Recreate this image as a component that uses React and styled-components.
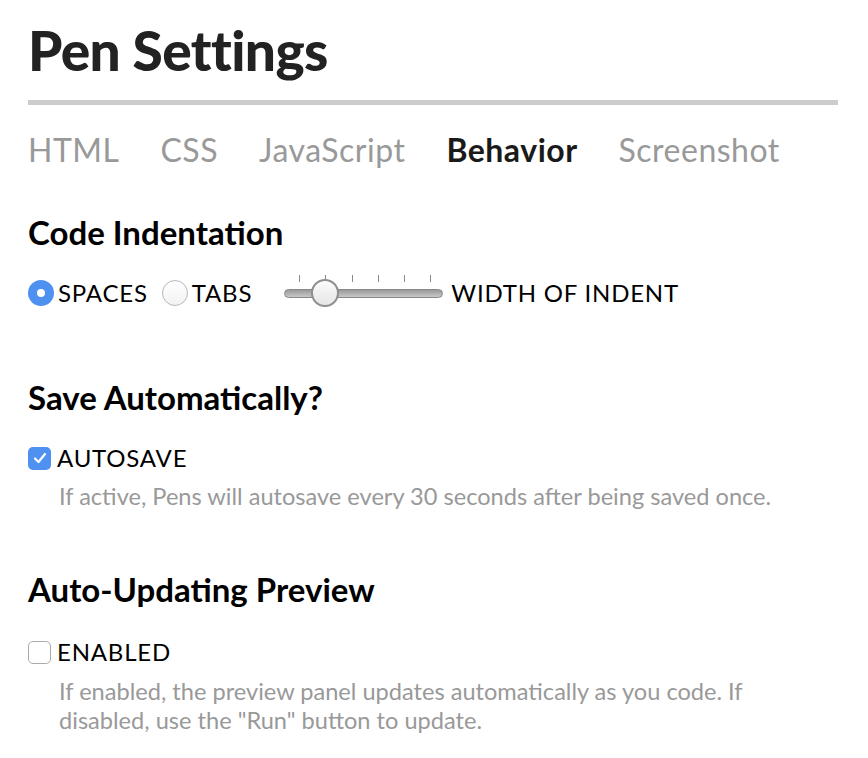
import React from "react";
import styled, { createGlobalStyle } from "styled-components";

const Global = createGlobalStyle`
  html, body { margin: 0; padding: 0; background: #fff; }
  body { font-family: Lato, "Noto Sans", sans-serif; color: #000; }
`;

const Page = styled.div`
  width: 810px;
  padding: 18px 0 0 28px;
`;

const Title = styled.h1`
  margin: 0;
  font-family: Lato, sans-serif;
  font-weight: 900;
  font-size: 55px;
  line-height: 64px;
  color: #222;
  letter-spacing: -0.6px;
`;

const Rule = styled.div`
  height: 5px;
  background: #ccc;
  margin-top: 18px;
`;

const Tabs = styled.nav`
  display: flex;
  gap: 41px;
  margin-top: 25px;
`;

const Tab = styled.span`
  font-size: 32px;
  line-height: 40px;
  letter-spacing: 0.5px;
  font-weight: ${p => (p.$active ? 700 : 400)};
  color: ${p => (p.$active ? "#1a1a1a" : "#999")};
`;

const Section = styled.section`
  margin-top: ${p => p.$mt}px;
`;

const Heading = styled.h2`
  margin: 0;
  font-size: 33px;
  line-height: 40px;
  font-weight: 700;
  color: #000;
`;

const Row = styled.div`
  display: flex;
  align-items: center;
  height: 30px;
  margin-top: ${p => p.$mt || 26}px;
`;

const OptionLabel = styled.label`
  display: flex;
  align-items: center;
  gap: 4px;
  font-size: 24px;
  line-height: 30px;
  letter-spacing: 0.8px;
  color: #000;
  margin-right: ${p => p.$mr || 0}px;
`;

const Radio = styled.span`
  width: 26px;
  height: 26px;
  border-radius: 50%;
  box-sizing: border-box;
  display: flex;
  align-items: center;
  justify-content: center;
  background: ${p => (p.$on ? "#4e91f0" : "linear-gradient(#fff, #f2f2f2)")};
  border: ${p => (p.$on ? "none" : "1px solid #b8b8b8")};
  &::after {
    content: "";
    display: ${p => (p.$on ? "block" : "none")};
    width: 8px;
    height: 8px;
    border-radius: 50%;
    background: #fff;
  }
`;

const SliderWrap = styled.div`
  position: relative;
  width: 159px;
  height: 30px;
  margin-right: 8px;
`;

const Track = styled.div`
  position: absolute;
  left: 0;
  right: 0;
  top: 11px;
  height: 9px;
  border-radius: 5px;
  background: linear-gradient(#999, #c8c8c8);
  border: 1px solid #888;
  box-sizing: border-box;
`;

const Tick = styled.span`
  position: absolute;
  top: -15px;
  width: 1px;
  height: 7px;
  background: #888;
`;

const Thumb = styled.div`
  position: absolute;
  left: 27px;
  top: 1px;
  width: 28px;
  height: 28px;
  border-radius: 50%;
  box-sizing: border-box;
  border: 2px solid #8f8f8f;
  background: linear-gradient(#fbfbfb, #e6e6e6);
`;

const Check = styled.span`
  width: 23px;
  height: 23px;
  box-sizing: border-box;
  border-radius: 5px;
  display: flex;
  align-items: center;
  justify-content: center;
  margin-right: 2px;
  background: ${p => (p.$on ? "#4e91f0" : "#fff")};
  border: ${p => (p.$on ? "none" : "1px solid #aaa")};
`;

const Desc = styled.p`
  margin: ${p => p.$mt || 9}px 0 0 31px;
  font-size: 23.6px;
  line-height: 29px;
  color: #999;
  max-width: 730px;
`;

const ticks = [14, 40, 67, 93, 119, 145];

export default function App() {
  return (
    <Page>
      <Global />
      <Title>Pen Settings</Title>
      <Rule />
      <Tabs>
        <Tab>HTML</Tab>
        <Tab>CSS</Tab>
        <Tab>JavaScript</Tab>
        <Tab $active>Behavior</Tab>
        <Tab>Screenshot</Tab>
      </Tabs>

      <Section $mt={42}>
        <Heading>Code Indentation</Heading>
        <Row>
          <OptionLabel $mr={14}>
            <Radio $on />
            SPACES
          </OptionLabel>
          <OptionLabel $mr={32}>
            <Radio />
            TABS
          </OptionLabel>
          <SliderWrap>
            <Track>
              {ticks.map(t => (
                <Tick key={t} style={{ left: t }} />
              ))}
            </Track>
            <Thumb />
          </SliderWrap>
          <OptionLabel>WIDTH OF INDENT</OptionLabel>
        </Row>
      </Section>

      <Section $mt={69}>
        <Heading>Save Automatically?</Heading>
        <Row>
          <OptionLabel>
            <Check $on>
              <svg width="14" height="12" viewBox="0 0 14 12">
                <path d="M2 6.5 L5.5 10 L12 2" fill="none" stroke="#fff" strokeWidth="2.2" strokeLinecap="round" strokeLinejoin="round" />
              </svg>
            </Check>
            AUTOSAVE
          </OptionLabel>
        </Row>
        <Desc>If active, Pens will autosave every 30 seconds after being saved once.</Desc>
      </Section>

      <Section $mt={58}>
        <Heading>Auto-Updating Preview</Heading>
        <Row $mt={28}>
          <OptionLabel>
            <Check />
            ENABLED
          </OptionLabel>
        </Row>
        <Desc $mt={10}>If enabled, the preview panel updates automatically as you code. If disabled, use the "Run" button to update.</Desc>
      </Section>
    </Page>
  );
}
